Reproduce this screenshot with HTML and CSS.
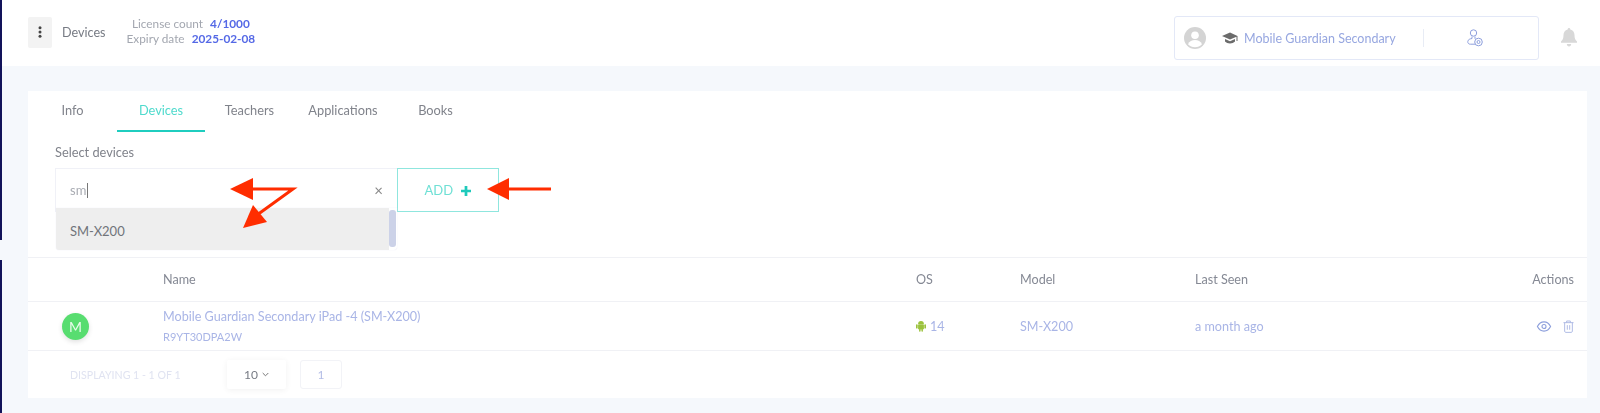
FILE: index.html
```html
<!DOCTYPE html>
<html lang="en">
<head>
    <meta charset="UTF-8">
    <meta name="viewport" content="width=device-width, initial-scale=1.0">
    <title>Devices</title>
    <link rel="stylesheet" href="styles.css">
</head>
<body>
    <div class="edge edge-top"></div>
    <div class="edge edge-bottom"></div>

    <header class="topbar">
        <div class="menu-btn">
            <svg width="4" height="12" viewBox="0 0 4 12"><circle cx="2" cy="1.700" r="1.500"/><circle cx="2" cy="6" r="1.500"/><circle cx="2" cy="10.300" r="1.500"/></svg>
        </div>
        <span class="page-title">Devices</span>
        <div class="license">
            <div>License count <b>4/1000</b></div>
            <div>Expiry date <b>2025-02-08</b></div>
        </div>
        <div class="account">
            <svg class="avatar" width="22" height="22" viewBox="0 0 22 22"><circle cx="11" cy="11" r="11" fill="#d4d4d4"/><circle cx="11" cy="8.200" r="3.800" fill="#fff"/><path d="M4 17.200c1.400-3 4-4.200 7-4.200s5.600 1.200 7 4.200c-1.800 2-4.200 3-7 3s-5.200-1-7-3z" fill="#fff"/></svg>
            <svg class="cap" width="16" height="12" viewBox="0 0 16 12"><path d="M8 .5 0 4l8 3.500L14.500 4.700V9h1V4z" fill="#6b6b6b"/><path d="M3 7v2.500c1.200 1.300 3 2 5 2s3.800-.7 5-2V7L8 9.200z" fill="#6b6b6b"/></svg>
            <span class="school">Mobile Guardian Secondary</span>
            <span class="divider"></span>
            <svg class="user-cog" width="16" height="18" viewBox="0 0 16 18" fill="none" stroke="#8d9fdc" stroke-width="1"><circle cx="6.500" cy="4" r="3.200"/><path d="M5 7.500v2C3 9.800 1 10.500.8 12.500c-.2 1.700 1 2.700 2.500 2.700H8M8 7.500v2.300"/><circle cx="11.500" cy="13" r="3.800"/><circle cx="11.500" cy="13" r="1.500"/></svg>
        </div>
        <svg class="bell" width="16" height="19" viewBox="0 0 16 19"><path d="M8 0c.8 0 1.300.6 1.300 1.400 2.800.6 4.200 2.800 4.200 5.600 0 3.400.8 4.800 2.500 6.500v1.200H0v-1.200C1.700 11.800 2.500 10.400 2.500 7c0-2.800 1.400-5 4.200-5.600C6.700.6 7.200 0 8 0z" fill="#d8d8d8"/><path d="M5.800 16h4.400c0 1.400-1 2.500-2.200 2.500S5.800 17.400 5.800 16z" fill="#d8d8d8"/></svg>
    </header>

    <main class="content">
        <section class="card">
            <nav class="tabs">
                <a class="tab tab-info">Info</a>
                <a class="tab tab-devices active">Devices</a>
                <a class="tab tab-teachers">Teachers</a>
                <a class="tab tab-apps">Applications</a>
                <a class="tab tab-books">Books</a>
            </nav>

            <div class="picker">
                <label class="picker-label">Select devices</label>
                <div class="picker-row">
                    <div class="select-wrap">
                        <div class="select-input">
                            <span class="typed">sm</span><span class="caret"></span>
                            <span class="clear">&times;</span>
                        </div>
                        <div class="select-menu">
                            <div class="select-option">SM-X200</div>
                            <div class="scrollbar"></div>
                        </div>
                    </div>
                    <button class="add-btn">ADD <svg width="10" height="10" viewBox="0 0 11 11"><path d="M4 0h3v4h4v3H7v4H4V7H0V4h4z" fill="#1fcabb"/></svg></button>
                </div>
            </div>

            <div class="table">
                <div class="row head">
                    <div class="col-avatar"></div>
                    <div class="col-name">Name</div>
                    <div class="col-os">OS</div>
                    <div class="col-model">Model</div>
                    <div class="col-seen">Last Seen</div>
                    <div class="col-actions">Actions</div>
                </div>
                <div class="row item">
                    <div class="col-avatar"><span class="letter">M</span></div>
                    <div class="col-name">
                        <div class="device-name">Mobile Guardian Secondary iPad -4 (SM-X200)</div>
                        <div class="serial">R9YT30DPA2W</div>
                    </div>
                    <div class="col-os">
                        <svg width="10" height="12" viewBox="0 0 12 14" fill="#9bc23c"><path d="M2.500 4.500a3.500 3.500 0 0 1 7 0z"/><rect x="2.500" y="5" width="7" height="6" rx=".8"/><rect x="0" y="5" width="2" height="5" rx="1"/><rect x="10" y="5" width="2" height="5" rx="1"/><rect x="3.700" y="10" width="1.800" height="4" rx=".9"/><rect x="6.500" y="10" width="1.800" height="4" rx=".9"/></svg>
                        14
                    </div>
                    <div class="col-model">SM-X200</div>
                    <div class="col-seen">a month ago</div>
                    <div class="col-actions">
                        <svg width="16" height="11" viewBox="0 0 16 12" fill="none" stroke="#8d9fdc" stroke-width="1.200"><path d="M.8 6C2.500 2.700 5 1 8 1s5.500 1.700 7.200 5C13.500 9.300 11 11 8 11S2.500 9.300.8 6z"/><circle cx="8" cy="6" r="2.200"/></svg>
                        <svg width="11" height="13" viewBox="0 0 12 14" fill="none" stroke="#a9b6e3" stroke-width="1"><path d="M.5 2.800h11M4 2.800V1h4v1.800M1.800 2.800v9.400c0 .7.500 1.200 1.200 1.200h6c.7 0 1.200-.5 1.200-1.200V2.800M4.700 5.500v5M7.300 5.500v5"/></svg>
                    </div>
                </div>
            </div>

            <div class="pager">
                <span class="pager-info">DISPLAYING 1 - 1 OF 1</span>
                <div class="page-size">10 <svg width="7" height="5" viewBox="0 0 7 5" fill="none" stroke="#777" stroke-width="1"><path d="M.7 1l2.800 2.800L6.300 1"/></svg></div>
                <div class="page-num">1</div>
            </div>
        </section>
    </main>

    <svg class="arrows" width="1600" height="413" viewBox="0 0 1600 413">
        <g fill="none" stroke="#ff2d00" stroke-width="3">
            <path d="M250 189h43L257 215"/>
            <path d="M505 189h46"/>
        </g>
        <g fill="#ff2d00">
            <path d="M230 189l23-11v22z"/>
            <path d="M243 228l10-23 14 17z"/>
            <path d="M487 189l22-11v22z"/>
        </g>
    </svg>
</body>
</html>
```

FILE: styles.css
```css
* {
    box-sizing: border-box;
}
body {
    margin: 0;
    height: 413px;
    overflow: hidden;
    background: #f5f8fc;
    font-family: "Lato", "Noto Sans", sans-serif;
    font-size: 12.6px;
    color: #6f7480;
    filter: blur(0.35px);
}

/* left window edge, cut by the capture */
.edge {
    position: absolute;
    left: 0;
    width: 2px;
    background: #12135a;
}
.edge-top {
    top: 0;
    height: 240px;
}
.edge-bottom {
    top: 260px;
    height: 153px;
}

.topbar {
    display: flex;
    align-items: center;
    height: 66px;
    padding: 0 23px 2px 28px;
    background: #fff;
}
.menu-btn {
    display: flex;
    align-items: center;
    justify-content: center;
    width: 24px;
    height: 31px;
    background: #f3f3f3;
    border-radius: 2px;
}
.menu-btn svg {
    fill: #444;
}
.page-title {
    margin-left: 10px;
    font-size: 12.6px;
    color: #777b84;
}
.license {
    margin-bottom: 2px;
    margin-left: 21px;
    font-size: 11.8px;
    line-height: 15px;
    color: #a3a7b0;
    text-align: center;
}
.license b {
    margin-left: 4px;
    color: #5569e6;
    font-weight: 700;
}
.account {
    display: flex;
    align-items: center;
    width: 365px;
    height: 44px;
    margin-top: 12px;
    margin-left: auto;
    padding-left: 9px;
    background: #fff;
    border: 1px solid #e3e8f7;
    border-radius: 3px;
}
.cap {
    margin-left: 16px;
}
.school {
    margin-left: 6px;
    font-size: 12.5px;
    color: #97a7e0;
    white-space: nowrap;
}
.divider {
    width: 1px;
    height: 18px;
    margin-left: 27px;
    background: #e8ecf5;
}
.user-cog {
    margin-left: 43px;
}
.bell {
    margin-top: 11px;
    margin-left: 22px;
}

.content {
    padding: 25px 13px 0 28px;
}
.card {
    height: 307px;
    background: #fff;
}

.tabs {
    display: flex;
    height: 41px;
}
.tab {
    display: flex;
    align-items: center;
    justify-content: center;
    height: 41px;
    padding-bottom: 4px;
    font-size: 12.8px;
    color: #80838b;
}
.tab-info {
    width: 89px;
}
.tab-devices {
    width: 88px;
}
.tab-teachers {
    width: 89px;
}
.tab-apps {
    width: 98px;
}
.tab-books {
    width: 87px;
}
.tab.active {
    padding-bottom: 2px;
    color: #4fdacd;
    border-bottom: 2px solid #1fcdbf;
}

.picker {
    padding: 12px 0 0 27px;
}
.picker-label {
    display: block;
    height: 24px;
    line-height: 16px;
    font-size: 12.8px;
    color: #80838b;
}
.picker-row {
    display: flex;
    align-items: flex-start;
}
.select-wrap {
    position: relative;
    width: 342px;
}
.select-input {
    display: flex;
    align-items: center;
    height: 44px;
    padding-left: 14px;
    border: 1px solid #f0f1f7;
    border-right: 0;
    font-size: 13px;
    color: #a9acb3;
}
.caret {
    width: 1px;
    height: 15px;
    margin-left: 1px;
    background: #777;
}
.clear {
    margin-left: auto;
    margin-right: 14px;
    font-size: 15px;
    color: #888;
}
.select-menu {
    position: absolute;
    top: 40px;
    left: 1px;
    right: 0;
    height: 42px;
    background: #fff;
    border-radius: 0 0 3px 3px;
    box-shadow: 0 0 1px #dde;
}
.select-option {
    display: flex;
    align-items: center;
    height: 42px;
    margin-right: 8px;
    padding: 3px 0 0 14px;
    background: #eeeeee;
    border-radius: 0 0 0 3px;
    font-size: 13px;
    color: #70747a;
}
.scrollbar {
    position: absolute;
    top: 2px;
    right: 1px;
    width: 7px;
    height: 37px;
    background: #ccd2e8;
    border-radius: 3px;
}
.add-btn {
    width: 102px;
    height: 44px;
    background: #fff;
    border: 1px solid #8fe6de;
    font-family: inherit;
    font-size: 13px;
    color: #6fe0d5;
}
.add-btn svg {
    margin-left: 5px;
    vertical-align: -1px;
}

.table {
    margin-top: 45px;
}
.row {
    display: flex;
    align-items: center;
    padding: 0 13px 0 27px;
    border-bottom: 1px solid #f0f1f5;
}
.row.head {
    height: 45px;
    border-top: 1px solid #f0f1f5;
    color: #858994;
}
.row.item {
    height: 49px;
    color: #a9b5e6;
}
.col-avatar {
    width: 108px;
}
.col-name {
    width: 753px;
}
.col-os {
    width: 104px;
    display: flex;
    align-items: center;
    gap: 4px;
}
.col-model {
    width: 175px;
}
.col-seen {
    flex: 1;
}
.col-actions {
    display: flex;
    align-items: center;
    justify-content: flex-end;
    gap: 11px;
}
.letter {
    display: flex;
    align-items: center;
    justify-content: center;
    width: 27px;
    height: 27px;
    margin-left: 7px;
    border-radius: 50%;
    background: #58dd70;
    box-shadow: 0 2px 5px rgba(0, 0, 0, 0.12);
    font-size: 14px;
    color: #e9fbec;
}
.device-name {
    line-height: 18px;
}
.serial {
    margin-top: 3px;
    font-size: 11px;
    line-height: 15px;
}

.pager {
    display: flex;
    align-items: center;
    height: 47px;
    padding-left: 42px;
}
.pager-info {
    width: 157px;
    font-size: 10.6px;
    color: #e0e3f1;
}
.page-size {
    display: flex;
    align-items: center;
    justify-content: center;
    gap: 4px;
    width: 59px;
    height: 29px;
    border-radius: 2px;
    box-shadow: 0 1px 6px rgba(0, 0, 0, 0.06);
    font-size: 12px;
    color: #777b84;
}
.page-num {
    display: flex;
    align-items: center;
    justify-content: center;
    width: 42px;
    height: 29px;
    margin-left: 14px;
    border: 1px solid #f2f3f7;
    border-radius: 3px;
    font-size: 12px;
    color: #b3bde6;
}

/* red annotations drawn on top of the shot */
.arrows {
    position: absolute;
    top: 0;
    left: 0;
    pointer-events: none;
}
```
